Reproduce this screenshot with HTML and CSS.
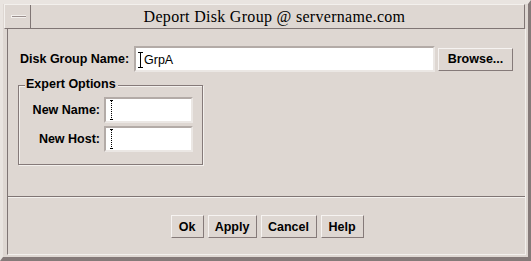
FILE: index.html
```html
<!DOCTYPE html>
<html>
<head>
<meta charset="utf-8">
<link rel="stylesheet" href="styles.css">
</head>
<body>
<div class="window">
  <div class="titlebar">
    <div class="menu-btn"><span class="dash"></span></div>
    <div class="title">Deport Disk Group @ servername.com</div>
  </div>
  <div class="client">
    <div class="main">
      <div class="row">
        <label class="label-main">Disk Group Name:</label>
        <div class="field field-wide">
          <svg class="ibeam" width="5" height="16" viewBox="0 0 5 16"><path d="M0 0.5H5M0 15.5H5M2.5 0V16" stroke="#000" stroke-width="1" fill="none"/></svg>
          <span class="value">GrpA</span>
        </div>
        <button class="btn btn-browse">Browse...</button>
      </div>
      <div class="group">
        <span class="legend">Expert Options</span>
        <div class="grid">
          <label class="label-sub">New Name:</label>
          <div class="field field-small">
            <svg class="ibeam-dotted" width="5" height="20" viewBox="0 0 5 20"><path d="M1 0.5H4M1 19.5H4" stroke="#000" stroke-width="1"/><path d="M2.5 1V19" stroke="#000" stroke-width="1" stroke-dasharray="1 1"/></svg>
          </div>
          <label class="label-sub">New Host:</label>
          <div class="field field-small">
            <svg class="ibeam-dotted" width="5" height="20" viewBox="0 0 5 20"><path d="M1 0.5H4M1 19.5H4" stroke="#000" stroke-width="1"/><path d="M2.5 1V19" stroke="#000" stroke-width="1" stroke-dasharray="1 1"/></svg>
          </div>
        </div>
      </div>
    </div>
    <div class="separator"></div>
    <div class="actions">
      <button class="btn btn-ok">Ok</button>
      <button class="btn btn-apply">Apply</button>
      <button class="btn btn-cancel">Cancel</button>
      <button class="btn btn-help">Help</button>
    </div>
  </div>
</div>
</body>
</html>
```

FILE: styles.css
```css
* { box-sizing: border-box; }
html, body { margin: 0; padding: 0; background: #ded7d2; }

.window {
  width: 531px;
  height: 261px;
  background: #ded7d2;
  border-top: 4px solid #e9e4e0;
  border-left: 3px solid #e9e4e0;
  border-right: 3px solid #857a79;
  border-bottom: 4px solid #857a79;
  display: flex;
  flex-direction: column;
}

.titlebar {
  height: 25px;
  margin: 0 3px 0 1px;
  border-top: 1px solid #f3f0ed;
  border-left: 1px solid #f3f0ed;
  border-bottom: 1px solid #7f7574;
  border-right: 1px solid #7f7574;
  display: flex;
  flex: none;
}

.menu-btn {
  width: 26px;
  border-right: 1px solid #7f7574;
  display: flex;
  align-items: center;
  justify-content: center;
  padding-left: 2px;
}

.dash {
  display: block;
  width: 15px;
  height: 3px;
  background: #9a8f8d;
  border-top: 1px solid #f3f0ed;
  border-left: 1px solid #f3f0ed;
  border-bottom: 1px solid #f3f0ed;
}

.title {
  flex: 1;
  text-align: center;
  font-family: "Liberation Serif", serif;
  font-size: 16px;
  letter-spacing: 0.3px;
  line-height: 23px;
  color: #000;
  padding-right: 6px;
}

.client {
  flex: 1;
  margin: 0 2px 2px 4px;
  border-left: 1px solid #7f7574;
  border-right: 1px solid #f3f0ed;
  border-bottom: 1px solid #f3f0ed;
  display: flex;
  flex-direction: column;
  font-family: "Liberation Sans", Arial, sans-serif;
  font-size: 12.5px;
  font-weight: bold;
  color: #000;
}

.main {
  flex: 1;
  padding: 17px 0 0 12px;
}

.row {
  display: flex;
  align-items: center;
  height: 26px;
}

.label-main {
  width: 114px;
  flex: none;
}

.field {
  height: 26px;
  background: #fff;
  border-top: 2px solid #b3aba7;
  border-left: 2px solid #b3aba7;
  border-bottom: 2px solid #ebe7e4;
  border-right: 2px solid #ebe7e4;
  display: flex;
  align-items: center;
}

.field-wide {
  width: 301px;
  padding-left: 2px;
}

.ibeam { display: block; margin-top: 1px; }

.value {
  font-weight: normal;
  margin-left: 1px;
  margin-top: 1px;
}

.btn {
  font-family: "Liberation Sans", Arial, sans-serif;
  font-size: 12.5px;
  font-weight: bold;
  color: #000;
  background: #ded7d2;
  border-top: 1px solid #f6f3f1;
  border-left: 1px solid #f6f3f1;
  border-bottom: 1px solid #857a79;
  border-right: 1px solid #857a79;
  border-radius: 0;
  height: 23px;
  padding: 0;
  margin: 0;
  text-align: center;
}

.btn-browse { width: 75px; margin-left: 3px; }

.group {
  position: relative;
  margin: 13px 0 0 -2px;
  width: 185px;
  height: 80px;
  border: 1px solid #857a79;
  box-shadow: inset 1px 1px 0 #f3f0ed, 1px 1px 0 #f3f0ed;
}

.legend {
  position: absolute;
  top: -9px;
  left: 6px;
  padding: 0 2px 0 1px;
  background: #ded7d2;
  line-height: 14px;
}

.grid {
  display: grid;
  grid-template-columns: 80px 89px;
  column-gap: 4px;
  row-gap: 3px;
  padding: 11px 0 0 1px;
  align-items: center;
}

.label-sub { text-align: right; }

.field-small {
  width: 89px;
  padding-left: 3px;
}

.ibeam-dotted { display: block; }

.separator {
  height: 2px;
  border-top: 1px solid #7f7574;
  border-bottom: 1px solid #f3f0ed;
  flex: none;
}

.actions {
  height: 56px;
  flex: none;
  display: flex;
  justify-content: center;
  gap: 4px;
  padding-top: 17px;
  padding-left: 1px;
}

.btn-ok { width: 33px; }
.btn-apply { width: 49px; }
.btn-cancel { width: 56px; }
.btn-help { width: 43px; }
```
